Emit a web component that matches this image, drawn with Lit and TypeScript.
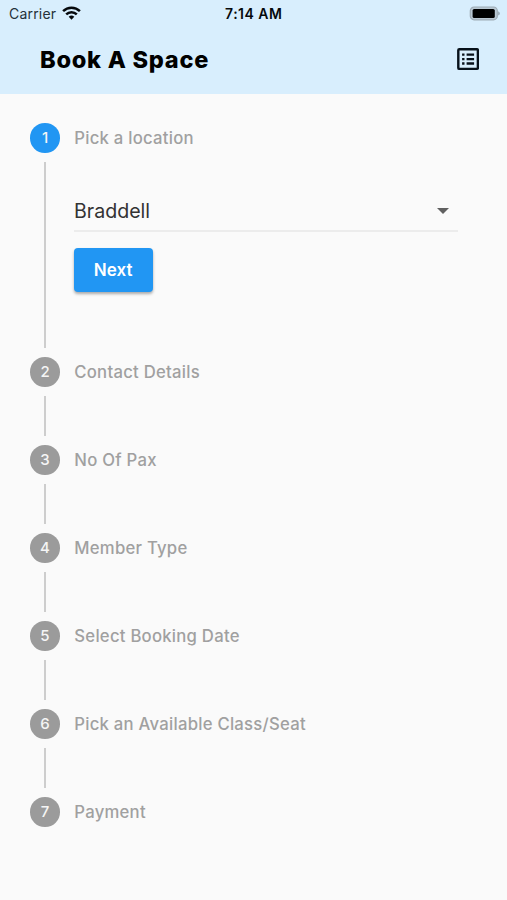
import { LitElement, html, css, svg, nothing } from "lit";
import { customElement, property } from "lit/decorators.js";
import { classMap } from "lit/directives/class-map.js";

@customElement("status-bar")
class StatusBar extends LitElement {
  static styles = css`
    :host { display: grid; grid-template-columns: 1fr auto 1fr; align-items: center; height: 27px; padding: 0 7px 0 9px; font-size: 14px; color: #06090c; }
    .carrier { display: flex; align-items: center; gap: 6px; color: #25313a; letter-spacing: 0.2px; }
    .time { font-weight: 600; letter-spacing: 0.5px; margin-right: 1.5px; }
    .battery { justify-self: end; }
    svg { display: block; }
    .carrier svg { margin-top: -2px; }
  `;
  render() {
    return html`
      <div class="carrier">
        <span>Carrier</span>
        <svg width="19" height="14" viewBox="0 0 19 14" fill="none" stroke="#06090c" stroke-width="2.5">
          <path d="M1.1 5.1a12 12 0 0 1 16.8 0" />
          <path d="M4.2 8.4a7.5 7.5 0 0 1 10.6 0" />
          <path d="M6.7 10.7a4.1 4.1 0 0 1 5.6 0L9.5 13.7z" fill="#06090c" stroke="none" />
        </svg>
      </div>
      <div class="time">7:14 AM</div>
      <svg class="battery" width="31" height="15" viewBox="0 0 31 15">
        <rect x="1.3" y="1" width="27" height="12.8" rx="3.8" fill="#b9c8d3" stroke="#9eabb5" stroke-width="1.2" />
        <rect x="3.6" y="3" width="22.2" height="9" rx="1.6" fill="#000" />
        <path d="M29.2 5.2v4.4q1.6-.7 1.6-2.2t-1.6-2.2z" fill="#93a2ad" />
      </svg>
    `;
  }
}

@customElement("step-item")
class StepItem extends LitElement {
  @property({ type: Number }) number = 1;
  @property() label = "";
  @property({ type: Boolean }) active = false;
  @property({ type: Boolean }) last = false;

  static styles = css`
    :host { display: grid; grid-template-columns: 30px 1fr; column-gap: 14px; min-height: 88px; }
    .rail { display: flex; flex-direction: column; align-items: center; }
    .dot { box-sizing: border-box; width: 29.6px; height: 29.6px; padding-bottom: 1px; flex: none; border-radius: 50%; background: #9b9b9b; color: #f5f5f5; display: flex; align-items: center; justify-content: center; font-size: 15px; font-weight: 500; }
    .dot.active { background: #2196f3; }
    .line { width: 1.6px; flex: 1; margin: 9.5px 0; background: #cdcdcd; }
    .label { height: 29.6px; line-height: 31.4px; padding-left: 0.3px; font-size: 16.7px; font-weight: 500; color: #a0a0a0; letter-spacing: 0.25px; white-space: nowrap; }
  `;
  render() {
    return html`
      <div class="rail">
        <div class=${classMap({ dot: true, active: this.active })}>${this.number}</div>
        ${this.last ? nothing : html`<div class="line"></div>`}
      </div>
      <div>
        <div class="label">${this.label}</div>
        <slot></slot>
      </div>
    `;
  }
}

const listIcon = svg`
  <rect x="1.3" y="1.3" width="19.6" height="19.6" rx="1" fill="none" stroke="#07111a" stroke-width="2.4" />
  <path d="M5.1 6.7h2.4M9.6 6.7h7.5M5.1 11.1h2.4M9.6 11.1h7.5M5.1 15.5h2.4M9.6 15.5h7.5" stroke="#07111a" stroke-width="2.3" />
`;

const STEPS = ["Contact Details", "No Of Pax", "Member Type", "Select Booking Date", "Pick an Available Class/Seat", "Payment"];

@customElement("app-root")
class AppRoot extends LitElement {
  static styles = css`
    :host { display: flex; flex-direction: column; height: 900px; background: #fafafa; font-family: Inter, "Liberation Sans", sans-serif; }
    .top { height: 94px; background: #d8eefd; }
    .bar { display: flex; align-items: center; justify-content: space-between; height: 65px; padding: 0 28px 0 40px; }
    h1 { margin: 0; padding-top: 1px; font-size: 23.6px; line-height: 30px; font-weight: 800; letter-spacing: 0.73px; color: #000; white-space: nowrap; }
    .bar svg { display: block; }
    .steps { display: flex; flex-direction: column; padding: 29.2px 30px 0; }
    .first { height: 234.2px; }
    .select { display: flex; align-items: center; justify-content: space-between; box-sizing: border-box; width: 384px; height: 39.6px; margin-top: 39.9px; padding-right: 9px; border-bottom: 2px solid #ececec; font-size: 19.6px; color: #333; }
    .next { display: block; width: 78.5px; height: 44px; margin-top: 15.6px; padding: 0; border: 0; border-radius: 4px; background: #2196f3; color: #fff; font: 600 17px Inter, sans-serif; letter-spacing: 0.1px; box-shadow: 0 2px 3px rgba(0, 0, 0, 0.32); }
  `;
  render() {
    return html`
      <header class="top">
        <status-bar></status-bar>
        <div class="bar">
          <h1>Book A Space</h1>
          <svg width="22.2" height="22.2" viewBox="0 0 22.2 22.2">${listIcon}</svg>
        </div>
      </header>
      <main class="steps">
        <step-item class="first" .number=${1} label="Pick a location" active>
          <div class="select">
            <span>Braddell</span>
            <svg width="12" height="6" viewBox="0 0 12 6"><path d="M0 0h12L6 6z" fill="#606060" /></svg>
          </div>
          <button class="next">Next</button>
        </step-item>
        ${STEPS.map((label, i) => html`
          <step-item .number=${i + 2} label=${label} ?last=${i === STEPS.length - 1}></step-item>
        `)}
      </main>
    `;
  }
}
